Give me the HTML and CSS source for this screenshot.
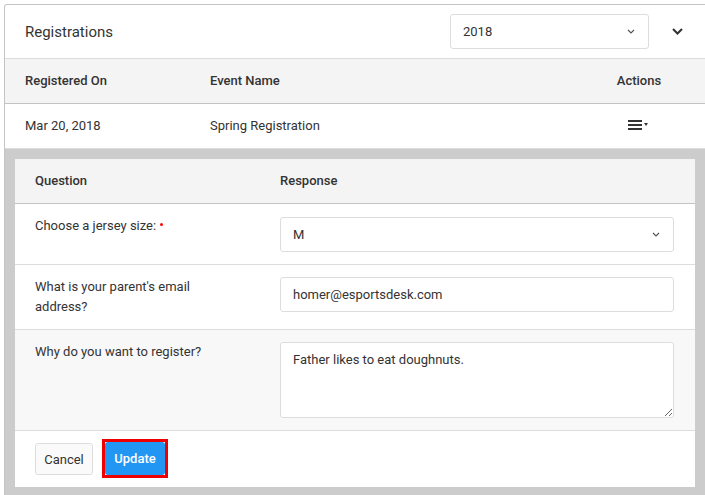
FILE: index.html
```html
<!DOCTYPE html>
<html lang="en">
<head>
    <meta charset="UTF-8">
    <title>Registrations</title>
    <link rel="stylesheet" href="styles.css">
</head>
<body>
    <div class="card">
        <div class="cardHeader">
            <div class="title">Registrations</div>
            <div class="select yearSelect">
                <span>2018</span>
                <svg class="smallChevron" width="8" height="5" viewBox="0 0 8 5"><path d="M1 1 L4 4 L7 1" fill="none" stroke="#555" stroke-width="1.2"/></svg>
            </div>
            <div class="toggle">
                <svg width="11" height="7" viewBox="0 0 11 7"><path d="M1 1 L5.5 5.5 L10 1" fill="none" stroke="#333" stroke-width="2"/></svg>
            </div>
        </div>
        <div class="row head">
            <div>Registered On</div>
            <div>Event Name</div>
            <div class="actions">Actions</div>
        </div>
        <div class="row">
            <div>Mar 20, 2018</div>
            <div>Spring Registration</div>
            <div class="actions">
                <span class="menu">
                    <span class="bars"><i></i><i></i><i></i></span>
                    <span class="caret"></span>
                </span>
            </div>
        </div>
        <div class="detail">
            <div class="panel">
                <div class="qRow qHead">
                    <div class="question">Question</div>
                    <div class="response">Response</div>
                </div>
                <div class="qRow first">
                    <div class="question">Choose a jersey size: <span class="required"></span></div>
                    <div class="response">
                        <div class="select">
                            <span>M</span>
                            <svg class="smallChevron" width="8" height="5" viewBox="0 0 8 5"><path d="M1 1 L4 4 L7 1" fill="none" stroke="#555" stroke-width="1.2"/></svg>
                        </div>
                    </div>
                </div>
                <div class="qRow">
                    <div class="question">What is your parent's email<br>address?</div>
                    <div class="response">
                        <input class="field" type="text" value="homer@esportsdesk.com">
                    </div>
                </div>
                <div class="qRow striped">
                    <div class="question">Why do you want to register?</div>
                    <div class="response">
                        <textarea class="field area">Father likes to eat doughnuts.</textarea>
                    </div>
                </div>
                <div class="footer">
                    <button class="btn cancel">Cancel</button>
                    <span class="highlight"><button class="btn update">Update</button></span>
                </div>
            </div>
        </div>
    </div>
</body>
</html>
```

FILE: styles.css
```css
html, body {
    margin: 0;
    overflow: hidden;
    height: 495px;
}

body {
    font-family: Roboto, "Liberation Sans", sans-serif;
    font-size: 13px;
    color: #333;
    background: #fff;
}

.card {
    display: flex;
    flex-direction: column;
    margin: 4px 0 0 4px;
    width: 700px;
    height: 491px;
    border: 1px solid #c4c4c4;
    border-bottom: none;
    border-radius: 3px 0 0 0;
}

.cardHeader {
    display: flex;
    align-items: center;
    height: 53px;
    padding-left: 20px;
    border-bottom: 1px solid #dcdcdc;
}

.title {
    flex: 1;
    font-size: 15px;
}

.select {
    display: flex;
    align-items: center;
    justify-content: space-between;
    box-sizing: border-box;
    height: 35px;
    padding: 0 13px 0 12px;
    border: 1px solid #ddd;
    border-radius: 3px;
    background: #fff;
}

.yearSelect {
    width: 199px;
}

.toggle {
    width: 56px;
    display: flex;
    justify-content: center;
}

.row {
    display: grid;
    grid-template-columns: 185px 1fr 100px;
    align-items: center;
    height: 44px;
    padding: 0 16px 0 20px;
    border-bottom: 1px solid #dcdcdc;
}

.row.head {
    background: #f4f4f4;
    font-weight: 500;
    border-bottom-color: #c4c4c4;
}

.row > div {
    margin-top: -2px;
}

.actions {
    display: flex;
    justify-content: center;
    align-items: center;
}

.menu {
    display: flex;
    align-items: center;
    margin-left: -2px;
}

.bars {
    display: flex;
    flex-direction: column;
    gap: 2px;
}

.bars i {
    display: block;
    width: 14px;
    height: 2px;
    background: #333;
}

.caret {
    margin-left: 2px;
    margin-top: -1px;
    border-left: 2.5px solid transparent;
    border-right: 2.5px solid transparent;
    border-top: 3px solid #333;
}

.detail {
    flex: 1;
    background: #ccc;
    padding: 10px 0 8px 10px;
}

.panel {
    width: 680px;
    background: #fff;
}

.qRow {
    display: flex;
    padding: 12px 0;
    border-bottom: 1px solid #ddd;
    line-height: 20px;
}

.qRow.first .select {
    margin-top: 1px;
}

.qRow.qHead {
    background: #f4f4f4;
    font-weight: 500;
    border-bottom-color: #c4c4c4;
}

.qRow.striped {
    background: #f8f8f8;
}

.question {
    width: 245px;
    padding-left: 20px;
}

.response {
    width: 394px;
}

.required {
    display: inline-block;
    width: 3px;
    height: 3px;
    margin-left: 1px;
    border-radius: 50%;
    background: #f00;
    vertical-align: 4px;
}

.field {
    display: block;
    box-sizing: border-box;
    width: 394px;
    height: 35px;
    padding: 0 12px;
    border: 1px solid #ddd;
    border-radius: 3px;
    font-family: inherit;
    font-size: 13px;
    color: #333;
    outline: none;
    background: #fff;
}

.area {
    height: 76px;
    padding: 8px 12px;
    resize: vertical;
    line-height: 17px;
}

.footer {
    display: flex;
    align-items: center;
    padding: 12px 20px;
    height: 32px;
}

.btn {
    font-family: inherit;
    font-size: 13px;
    height: 32px;
    border-radius: 3px;
    cursor: pointer;
}

.cancel {
    width: 58px;
    margin-right: 9px;
    background: #fafafa;
    border: 1px solid #ddd;
    color: #333;
}

.highlight {
    display: flex;
    border: 3px solid #e00;
    margin-top: -1px;
}

.update {
    width: 60px;
    height: 33px;
    background: #2196f3;
    border: none;
    color: #fff;
    font-weight: 500;
}
```
